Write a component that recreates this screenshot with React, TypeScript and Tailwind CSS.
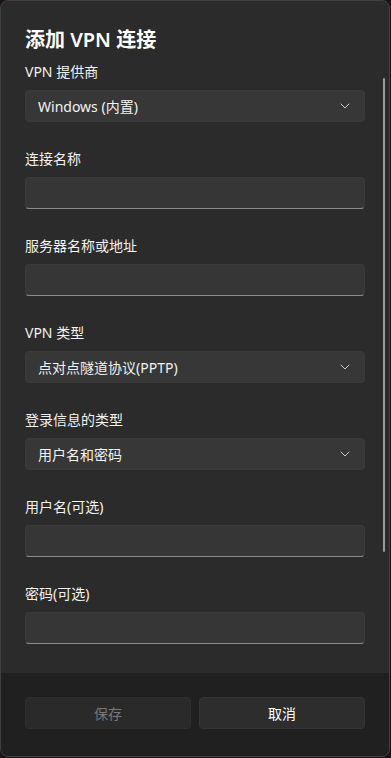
const font = { fontFamily: '"Noto Sans", "Noto Sans CJK SC", sans-serif' };

function Chevron() {
  return (
    <svg width="10" height="6" viewBox="0 0 10 6" className="text-[#c8c8c8]">
      <path d="M1 1l4 4 4-4" fill="none" stroke="currentColor" strokeWidth="1" strokeLinecap="round" strokeLinejoin="round" />
    </svg>
  );
}

function Select({ value }: { value: string }) {
  return (
    <div className="flex h-8 items-center justify-between rounded-[4px] border border-[#3a3a3a] bg-[#373737] pl-3 pr-[14px] text-[14px] text-[#f2f2f2]">
      <span>{value}</span>
      <Chevron />
    </div>
  );
}

function Input() {
  return <div className="h-8 rounded-[4px] border border-[#3a3a3a] border-b-[#8c8c8c] bg-[#363636]" />;
}

const fields: { label: string; value?: string }[] = [
  { label: "连接名称" },
  { label: "服务器名称或地址" },
  { label: "VPN 类型", value: "点对点隧道协议(PPTP)" },
  { label: "登录信息的类型", value: "用户名和密码" },
  { label: "用户名(可选)" },
  { label: "密码(可选)" },
];

export default function App() {
  return (
    <div className="h-[758px] w-[391px] bg-[#1b1318]" style={font}>
      <div className="relative flex h-[757px] w-[390px] flex-col overflow-hidden rounded-lg border border-[#414141] bg-[#2b2b2b]">
        <div className="flex-1 overflow-hidden px-6 pt-[25px]">
          <h1 className="text-[20px] font-semibold leading-7 text-white">添加 VPN 连接</h1>
          <div className="mt-2 flex flex-col gap-[27px]">
            <div>
              <div className="mb-2 text-[14px] leading-5 text-[#f2f2f2]">VPN 提供商</div>
              <Select value="Windows (内置)" />
            </div>
            {fields.map((f) => (
              <div key={f.label}>
                <div className="mb-2 text-[14px] leading-5 text-[#f2f2f2]">{f.label}</div>
                {f.value ? <Select value={f.value} /> : <Input />}
              </div>
            ))}
          </div>
        </div>
        <div className="absolute right-[4px] top-[77px] h-[474px] w-[2px] rounded-full bg-[#9a9a9a]" />
        <div className="flex h-[83px] shrink-0 gap-2 bg-[#202020] px-6 pt-[24px]">
          <button className="h-8 flex-1 rounded-[4px] border border-[#2e2e2e] bg-[#2a2a2a] text-[14px] text-[#787878]">保存</button>
          <button className="h-8 flex-1 rounded-[4px] border border-[#353535] bg-[#2d2d2d] text-[14px] text-white">取消</button>
        </div>
      </div>
    </div>
  );
}
